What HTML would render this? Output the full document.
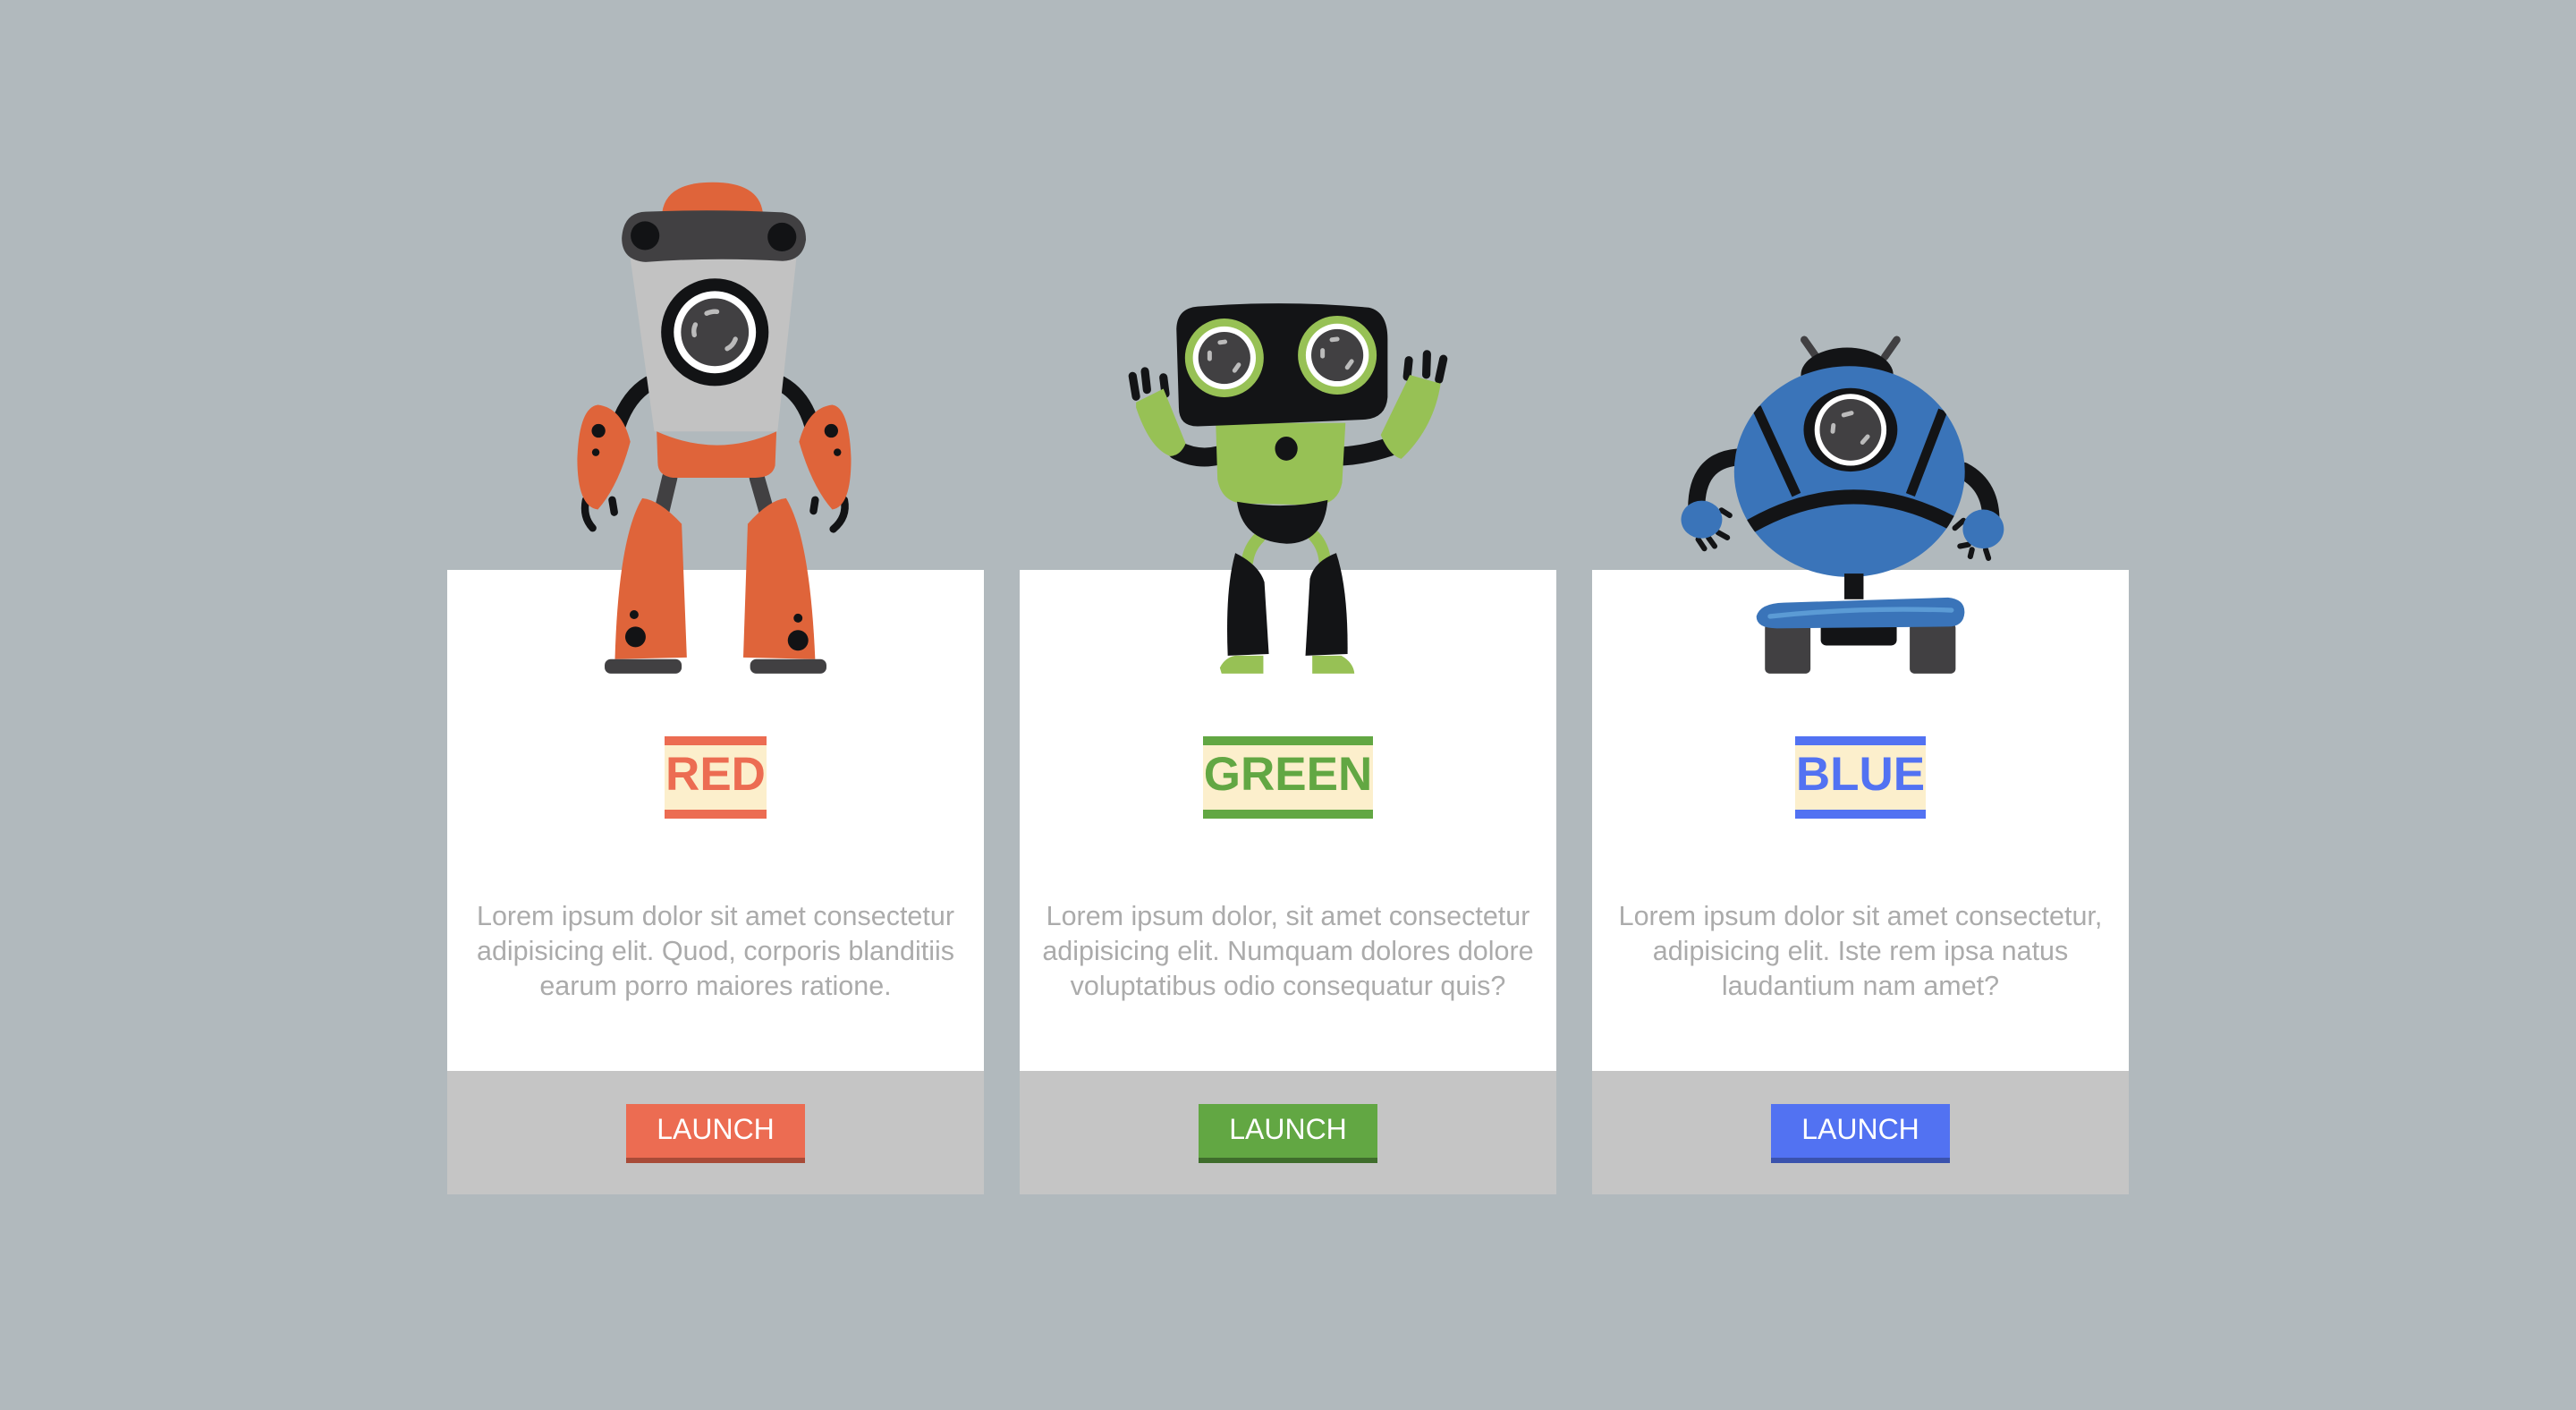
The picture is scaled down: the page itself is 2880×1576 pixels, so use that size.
<!DOCTYPE html>
<html><head><meta charset="utf-8"><style>
*{margin:0;padding:0;box-sizing:border-box}
body{width:2880px;height:1576px;background:#b1b9bd;position:relative;overflow:hidden;font-family:"Liberation Sans","NanumGothic",sans-serif}
.card{position:absolute;top:637px;width:600px;height:698px;background:#fff}
.foot{position:absolute;left:0;top:560px;width:600px;height:138px;background:#c5c5c5}
.lbl{position:absolute;top:186px;left:0;width:600px;text-align:center}
.lbl span{display:inline-block;height:92px;border-top:10px solid;border-bottom:10px solid;background:#fcefcc;font-weight:bold;font-size:53px;line-height:66px;padding:0 1px}
.p{position:absolute;top:368px;left:10px;width:580px;text-align:center;font-size:30.5px;line-height:39px;color:#ababab}
.btn{position:absolute;top:37px;left:200px;width:200px;height:66px;color:#fff;font-size:32px;line-height:56px;text-align:center;border-bottom:6px solid}
svg{position:absolute;top:180px;width:600px;height:600px}
</style></head><body>

<div class="card" style="left:500px">
 <div class="lbl"><span style="color:#ec6c52;border-color:#ec6c52">RED</span></div>
 <div class="p">Lorem ipsum dolor sit amet consectetur adipisicing elit. Quod, corporis blanditiis earum porro maiores ratione.</div>
 <div class="foot"><div class="btn" style="background:#ec6c52;border-color:#a84b38">LAUNCH</div></div>
</div>
<div class="card" style="left:1140px">
 <div class="lbl"><span style="color:#62a743;border-color:#62a743">GREEN</span></div>
 <div class="p">Lorem ipsum dolor, sit amet consectetur adipisicing elit. Numquam dolores dolore voluptatibus odio consequatur quis?</div>
 <div class="foot"><div class="btn" style="background:#62a743;border-color:#3f6d2c">LAUNCH</div></div>
</div>
<div class="card" style="left:1780px">
 <div class="lbl"><span style="color:#5272f2;border-color:#5272f2">BLUE</span></div>
 <div class="p">Lorem ipsum dolor sit amet consectetur, adipisicing elit. Iste rem ipsa natus laudantium nam amet?</div>
 <div class="foot"><div class="btn" style="background:#5272f2;border-color:#3a52ad">LAUNCH</div></div>
</div>

<!-- RED robot -->
<svg style="left:500px" viewBox="0 0 1568 1568">
 <g fill="none" stroke-linecap="round">
  <path d="M590,650 Q530,685 500,770" stroke="#121315" stroke-width="45"/>
  <path d="M975,650 Q1040,685 1065,770" stroke="#121315" stroke-width="45"/>
  <path d="M650,925 L625,1030" stroke="#414042" stroke-width="45"/>
  <path d="M905,925 L935,1030" stroke="#414042" stroke-width="45"/>
  <path d="M405,990 Q395,1040 425,1072" stroke="#121315" stroke-width="22"/>
  <path d="M482,990 L488,1026" stroke="#121315" stroke-width="22"/>
  <path d="M1160,990 Q1170,1040 1128,1075" stroke="#121315" stroke-width="22"/>
  <path d="M1075,990 L1070,1022" stroke="#121315" stroke-width="22"/>
 </g>
 <path d="M628,150 Q640,62 775,62 Q910,62 922,150 Z" fill="#df643a"/>
 <path d="M535,285 L1020,285 L965,790 L605,790 Z" fill="#c2c2c2"/>
 <path d="M612,790 Q790,870 962,790 L958,890 Q950,925 900,925 L660,925 Q615,920 615,880 Z" fill="#df643a"/>
 <path d="M580,148 Q780,140 980,150 Q1048,160 1048,230 Q1040,290 980,292 Q780,280 580,295 Q510,290 510,225 Q515,150 580,148 Z" fill="#414042"/>
 <circle cx="578" cy="218" r="42" fill="#121315"/>
 <circle cx="978" cy="222" r="42" fill="#121315"/>
 <circle cx="782" cy="500" r="157" fill="#121315"/>
 <circle cx="782" cy="500" r="120" fill="#fff"/>
 <circle cx="782" cy="500" r="99" fill="#414042"/>
 <g fill="none" stroke="#bbb" stroke-width="14" stroke-linecap="round"><path d="M758,445 Q775,438 788,440"/><path d="M725,478 Q718,492 722,508"/><path d="M842,520 Q835,540 818,548"/></g>
 <path d="M440,712 Q510,720 535,820 Q500,950 440,1018 Q380,1010 380,870 Q385,720 440,712 Z" fill="#df643a"/>
 <path d="M1125,712 Q1055,720 1028,820 Q1065,950 1125,1018 Q1180,1010 1180,870 Q1175,720 1125,712 Z" fill="#df643a"/>
 <circle cx="442" cy="788" r="20" fill="#121315"/><circle cx="434" cy="851" r="11" fill="#121315"/>
 <circle cx="1122" cy="788" r="20" fill="#121315"/><circle cx="1140" cy="851" r="11" fill="#121315"/>
 <path d="M570,985 Q620,990 685,1060 L700,1450 L490,1455 Q500,1100 570,985 Z" fill="#df643a"/>
 <path d="M990,985 Q940,990 878,1060 L865,1450 L1075,1455 Q1060,1100 990,985 Z" fill="#df643a"/>
 <circle cx="546" cy="1325" r="13" fill="#121315"/><circle cx="550" cy="1390" r="30" fill="#121315"/>
 <circle cx="1025" cy="1335" r="13" fill="#121315"/><circle cx="1025" cy="1400" r="30" fill="#121315"/>
 <rect x="460" y="1455" width="225" height="42" rx="18" fill="#414042"/>
 <rect x="885" y="1455" width="223" height="42" rx="18" fill="#414042"/>
</svg>

<!-- GREEN robot -->
<svg style="left:1140px" viewBox="0 0 1568 1568">
 <g fill="none" stroke-linecap="round" stroke="#131416">
  <path d="M580,860 Q520,875 460,845" stroke-width="55"/>
  <path d="M945,862 Q1010,858 1080,835" stroke-width="55"/>
  <path d="M330,628 L340,688" stroke-width="24"/><path d="M366,614 L372,668" stroke-width="24"/><path d="M420,632 L426,680" stroke-width="24"/>
  <path d="M1137,582 L1132,630" stroke-width="24"/><path d="M1190,564 L1188,624" stroke-width="24"/><path d="M1238,578 L1225,638" stroke-width="24"/>
 </g>
 <g fill="none" stroke-linecap="round" stroke="#97c155" stroke-width="35">
  <path d="M700,1100 Q670,1130 665,1170"/><path d="M860,1095 Q888,1125 892,1170"/>
 </g>
 <path d="M340,705 L420,665 L485,825 Q470,860 440,862 Q380,840 340,720 Z" fill="#97c155"/>
 <path d="M1055,800 L1140,625 L1230,650 Q1210,780 1115,870 Q1080,860 1055,800 Z" fill="#97c155"/>
 <path d="M573,765 L952,765 L942,940 Q930,1000 870,1005 L650,1000 Q590,995 578,930 Z" fill="#97c155"/>
 <ellipse cx="779" cy="840" rx="33" ry="35" fill="#131416"/>
 <path d="M635,995 Q780,1020 900,990 Q890,1115 780,1118 Q650,1110 635,995 Z" fill="#131416"/>
 <path d="M520,425 Q780,405 1020,428 Q1075,440 1075,520 L1075,690 Q1070,750 1010,755 Q780,765 520,775 Q465,775 465,720 L458,490 Q460,430 520,425 Z" fill="#131416"/>
 <circle cx="598" cy="575" r="115" fill="#97c155"/><circle cx="598" cy="575" r="92" fill="#fff"/><circle cx="598" cy="575" r="76" fill="#414042"/>
 <circle cx="928" cy="567" r="115" fill="#97c155"/><circle cx="928" cy="567" r="92" fill="#fff"/><circle cx="928" cy="567" r="76" fill="#414042"/>
 <g fill="none" stroke="#bbb" stroke-width="13" stroke-linecap="round"><path d="M585,530 L600,528"/><path d="M555,560 L555,578"/><path d="M640,595 L628,612"/><path d="M912,522 L928,520"/><path d="M885,553 L885,570"/><path d="M970,585 L957,603"/></g>
 <path d="M630,1145 Q700,1180 715,1230 L728,1440 L608,1445 Q600,1250 630,1145 Z" fill="#131416"/>
 <path d="M925,1145 Q860,1170 848,1220 L835,1445 L958,1440 Q960,1250 925,1145 Z" fill="#131416"/>
 <path d="M585,1480 Q600,1450 630,1445 L712,1445 L712,1497 L590,1497 Z" fill="#97c155"/>
 <path d="M855,1445 L940,1445 Q975,1465 978,1497 L855,1497 Z" fill="#97c155"/>
</svg>

<!-- BLUE robot -->
<svg style="left:1780px" viewBox="0 0 1568 1568">
 <defs><clipPath id="bc"><ellipse cx="752" cy="907" rx="337" ry="308"/></clipPath></defs>
 <g fill="none" stroke-linecap="round">
  <path d="M620,522 L655,572" stroke="#414042" stroke-width="22"/>
  <path d="M890,522 L855,572" stroke="#414042" stroke-width="22"/>
  <path d="M425,865 Q305,875 305,1015" stroke="#131416" stroke-width="50"/>
  <path d="M1085,905 Q1170,950 1165,1060" stroke="#131416" stroke-width="50"/>
  <g stroke="#131416" stroke-width="16">
   <path d="M378,1020 L402,1035"/><path d="M368,1085 L395,1100"/><path d="M340,1100 L358,1125"/><path d="M310,1105 L328,1132"/>
   <path d="M1085,1050 L1060,1072"/><path d="M1075,1125 L1100,1120"/><path d="M1110,1135 L1105,1155"/><path d="M1150,1135 L1158,1160"/>
  </g>
 </g>
 <ellipse cx="745" cy="625" rx="135" ry="80" fill="#131416"/>
 <ellipse cx="752" cy="907" rx="337" ry="308" fill="#3a74b9"/>
 <g clip-path="url(#bc)" fill="none" stroke="#131416" stroke-width="28">
  <path d="M480,720 L597,975"/><path d="M1025,728 L930,975"/>
  <path d="M440,1080 Q750,890 1065,1065" stroke-width="42"/>
 </g>
 <ellipse cx="755" cy="785" rx="137" ry="122" fill="#131416"/>
 <circle cx="755" cy="785" r="105" fill="#fff"/><circle cx="755" cy="785" r="90" fill="#414042"/>
 <g fill="none" stroke="#bbb" stroke-width="13" stroke-linecap="round"><path d="M735,742 L758,736"/><path d="M705,772 L703,790"/><path d="M805,805 L790,822"/></g>
 <ellipse cx="320" cy="1047" rx="60" ry="55" fill="#3a74b9"/>
 <ellipse cx="1143" cy="1075" rx="60" ry="57" fill="#3a74b9"/>
 <rect x="737" y="1205" width="56" height="75" fill="#131416"/>
 <rect x="668" y="1340" width="222" height="75" rx="16" fill="#131416"/>
 <rect x="505" y="1350" width="133" height="147" rx="14" fill="#414042"/>
 <rect x="928" y="1350" width="134" height="147" rx="14" fill="#414042"/>
 <path d="M480,1330 Q490,1292 560,1290 L1040,1275 Q1090,1280 1088,1320 Q1085,1360 1040,1360 L540,1365 Q480,1365 480,1330 Z" fill="#3a74b9"/>
 <path d="M520,1330 Q780,1302 1050,1312" fill="none" stroke="#5b9bd5" stroke-width="14" stroke-linecap="round"/>
</svg>

</body></html>
